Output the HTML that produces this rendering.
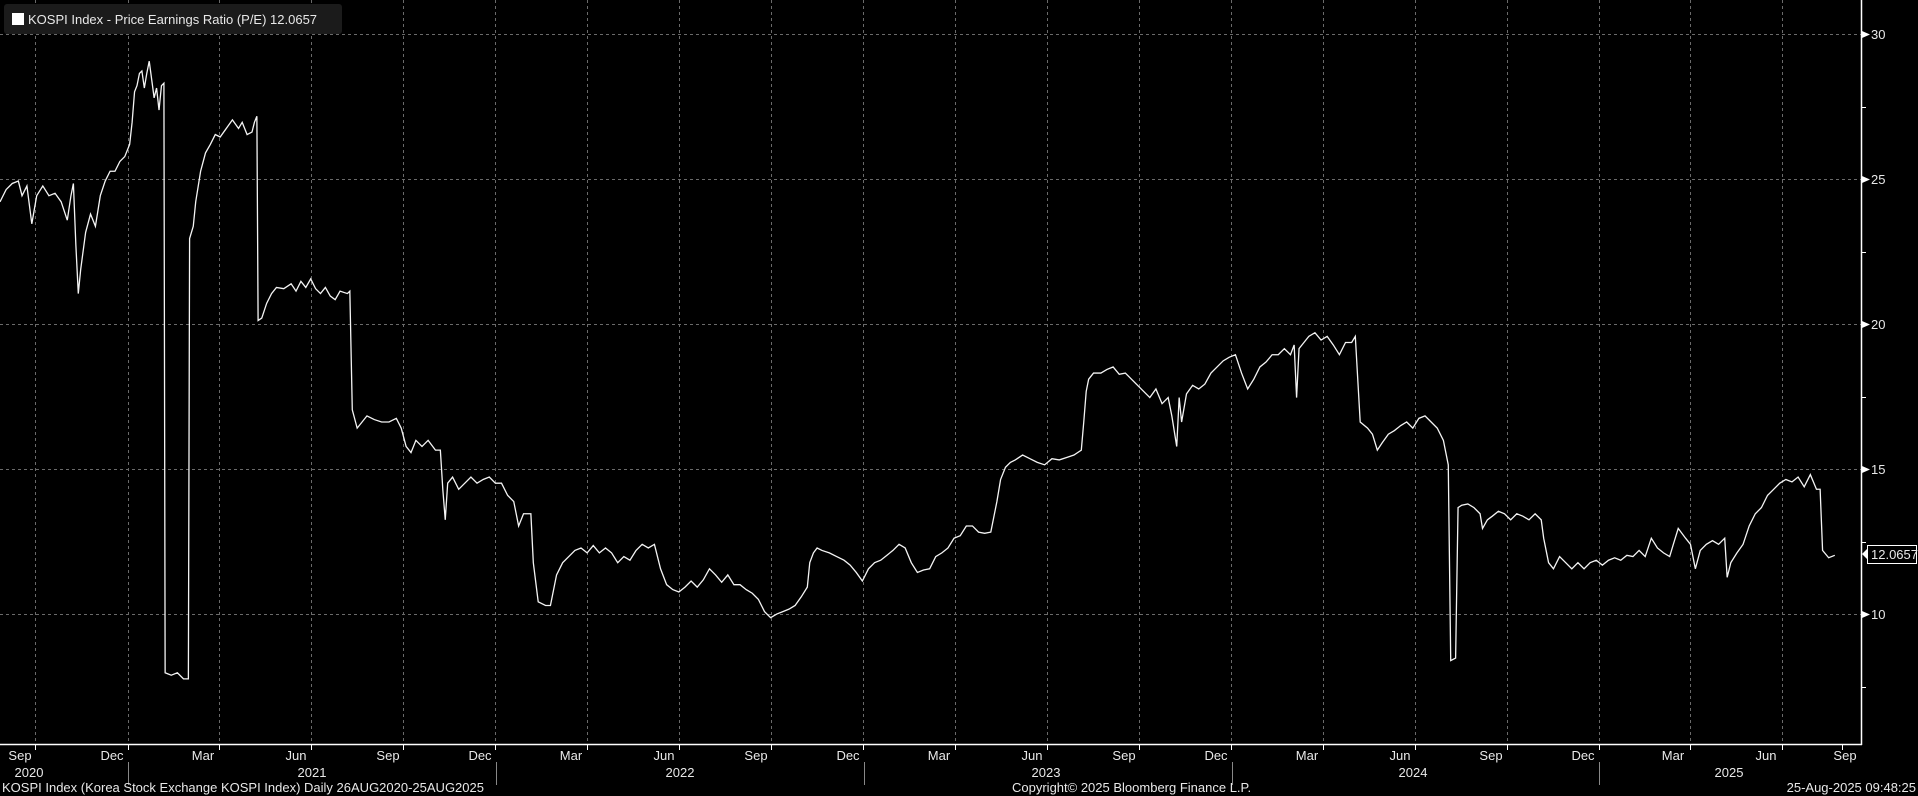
<!DOCTYPE html>
<html><head><meta charset="utf-8"><style>
html,body{margin:0;padding:0;background:#000;width:1918px;height:796px;overflow:hidden}
svg{display:block}
text{font-family:"Liberation Sans",sans-serif;fill:#e8e8e8;font-size:13px}
</style></head><body>
<svg width="1918" height="796" viewBox="0 0 1918 796" xmlns="http://www.w3.org/2000/svg">
<rect width="1918" height="796" fill="#000"/>
<g stroke="#6a6a6a" stroke-width="1" stroke-dasharray="3,3">
<line x1="0" y1="34.5" x2="1861" y2="34.5"/>
<line x1="0" y1="179.5" x2="1861" y2="179.5"/>
<line x1="0" y1="324.5" x2="1861" y2="324.5"/>
<line x1="0" y1="469.5" x2="1861" y2="469.5"/>
<line x1="0" y1="614.5" x2="1861" y2="614.5"/>
<line x1="35.5" y1="0" x2="35.5" y2="744"/><line x1="128.5" y1="0" x2="128.5" y2="744"/>
<line x1="219.5" y1="0" x2="219.5" y2="744"/><line x1="311.5" y1="0" x2="311.5" y2="744"/>
<line x1="403.5" y1="0" x2="403.5" y2="744"/><line x1="495.5" y1="0" x2="495.5" y2="744"/>
<line x1="587.5" y1="0" x2="587.5" y2="744"/><line x1="679.5" y1="0" x2="679.5" y2="744"/>
<line x1="771.5" y1="0" x2="771.5" y2="744"/><line x1="863.5" y1="0" x2="863.5" y2="744"/>
<line x1="955.5" y1="0" x2="955.5" y2="744"/><line x1="1047.5" y1="0" x2="1047.5" y2="744"/>
<line x1="1139.5" y1="0" x2="1139.5" y2="744"/><line x1="1231.5" y1="0" x2="1231.5" y2="744"/>
<line x1="1323.5" y1="0" x2="1323.5" y2="744"/><line x1="1415.5" y1="0" x2="1415.5" y2="744"/>
<line x1="1507.5" y1="0" x2="1507.5" y2="744"/><line x1="1599.5" y1="0" x2="1599.5" y2="744"/>
<line x1="1690.5" y1="0" x2="1690.5" y2="744"/><line x1="1782.5" y1="0" x2="1782.5" y2="744"/>
</g>
<g transform="scale(1.2232)">
<polyline fill="none" stroke="#f4f4f4" stroke-width="1.3" vector-effect="non-scaling-stroke" points="0,165 5,155 10,150 15,148 18,160 22,152 26,183 30,160 35,152 40,160 45,158 50,165 55,180 58,160 60,150 62,200 64,240 66,220 70,190 74,175 78,185 82,160 86,148 90,140 94,140 98,132 102,128 106,118 108,100 110,75 112,70 114,60 116,58 118,72 120,60 122,50 124,65 126,80 128,72 130,90 132,70 134,68 135,550 140,552 145,550 150,555 154,555 155,195 158,185 160,165 164,140 168,125 172,118 176,110 180,112 185,105 190,98 195,105 198,100 202,110 206,108 208,100 210,95 211,262 214,260 218,248 222,240 226,235 232,236 238,232 242,238 246,230 250,235 254,228 258,236 262,240 266,235 270,242 274,245 278,238 284,240 286,238 288,335 292,350 296,345 300,340 306,343 312,345 318,345 324,342 328,350 332,365 336,370 340,360 345,365 350,360 356,368 360,368 362,400 364,425 366,395 370,390 375,400 380,395 385,390 390,395 395,392 400,390 405,395 410,395 415,405 420,410 424,430 428,420 434,420 436,460 440,492 446,495 450,495 455,470 460,460 465,455 470,450 475,448 480,452 485,446 490,452 495,448 500,452 505,460 510,455 515,458 520,450 525,445 530,448 535,445 540,465 545,478 550,482 555,484 560,480 565,475 570,480 575,474 580,465 585,470 590,476 595,470 600,478 605,478 610,482 615,485 620,490 625,500 630,505 635,502 640,500 645,498 650,495 655,488 660,480 662,460 665,452 668,448 672,450 678,452 684,455 690,458 695,462 700,468 705,475 710,465 715,460 720,458 725,454 730,450 735,445 740,448 745,460 750,468 755,466 760,465 765,455 770,452 775,448 780,440 785,438 790,430 795,430 800,435 805,436 810,435 815,410 818,392 822,382 826,378 830,376 836,372 842,375 848,378 854,380 860,375 866,376 872,374 878,372 884,368 886,345 888,320 890,310 894,305 900,305 905,302 910,300 915,306 920,305 925,310 930,315 935,320 940,325 945,318 950,330 955,325 958,340 962,365 964,325 966,345 970,322 975,315 980,318 985,314 990,305 995,300 1000,295 1005,292 1010,290 1015,305 1020,318 1025,310 1030,300 1035,296 1040,290 1045,290 1050,285 1055,290 1058,282 1060,325 1062,285 1066,280 1070,275 1075,272 1080,278 1085,275 1090,282 1095,290 1100,280 1105,280 1108,275 1112,345 1118,350 1122,355 1126,368 1130,362 1135,355 1140,352 1145,348 1150,345 1155,350 1160,342 1165,340 1170,345 1175,350 1180,360 1184,380 1186,540 1190,538 1192,415 1195,413 1200,412 1205,415 1210,420 1212,432 1216,425 1220,422 1225,418 1230,420 1235,425 1240,420 1245,422 1250,425 1255,420 1260,425 1262,440 1266,460 1270,465 1275,455 1280,460 1285,465 1290,460 1295,465 1300,460 1305,458 1310,462 1315,458 1320,456 1325,458 1330,454 1335,455 1340,450 1345,455 1350,440 1355,448 1360,452 1365,455 1368,445 1372,432 1378,440 1382,445 1386,465 1390,450 1395,445 1400,442 1405,445 1410,440 1412,472 1415,460 1420,452 1425,445 1430,430 1435,420 1440,415 1445,405 1450,400 1455,395 1460,392 1465,394 1470,390 1475,398 1480,388 1485,400 1488,400 1490,450 1495,456 1500,454"/>
</g>
<!-- axes -->
<line x1="1861.5" y1="0" x2="1861.5" y2="745" stroke="#fff" stroke-width="1.5"/>
<line x1="0" y1="744.5" x2="1862" y2="744.5" stroke="#fff" stroke-width="1.5"/>
<g fill="#fff">
<polygon points="1862,31 1870,34.5 1862,38"/><polygon points="1862,176 1870,179.5 1862,183"/>
<polygon points="1862,321 1870,324.5 1862,328"/><polygon points="1862,466 1870,469.5 1862,473"/>
<polygon points="1862,611 1870,614.5 1862,618"/>
</g>
<g stroke="#fff"><line x1="1862" y1="107.5" x2="1866" y2="107.5"/><line x1="1862" y1="252.5" x2="1866" y2="252.5"/><line x1="1862" y1="397.5" x2="1866" y2="397.5"/><line x1="1862" y1="542.5" x2="1866" y2="542.5"/><line x1="1862" y1="687.5" x2="1866" y2="687.5"/></g>
<g font-size="14"><text x="1871" y="39">30</text><text x="1871" y="184">25</text><text x="1871" y="329">20</text><text x="1871" y="474">15</text><text x="1871" y="619">10</text></g>
<!-- value box -->
<polygon points="1862,554 1868,548 1868,560" fill="#fff"/>
<rect x="1867.5" y="545.5" width="49" height="18" fill="#000" stroke="#fff"/>
<text x="1871" y="559">12.0657</text>
<!-- x ticks -->
<g stroke="#fff"><line x1="35.5" y1="745" x2="35.5" y2="750"/><line x1="128.5" y1="745" x2="128.5" y2="750"/><line x1="219.5" y1="745" x2="219.5" y2="750"/><line x1="311.5" y1="745" x2="311.5" y2="750"/><line x1="403.5" y1="745" x2="403.5" y2="750"/><line x1="495.5" y1="745" x2="495.5" y2="750"/><line x1="587.5" y1="745" x2="587.5" y2="750"/><line x1="679.5" y1="745" x2="679.5" y2="750"/><line x1="771.5" y1="745" x2="771.5" y2="750"/><line x1="863.5" y1="745" x2="863.5" y2="750"/><line x1="955.5" y1="745" x2="955.5" y2="750"/><line x1="1047.5" y1="745" x2="1047.5" y2="750"/><line x1="1139.5" y1="745" x2="1139.5" y2="750"/><line x1="1231.5" y1="745" x2="1231.5" y2="750"/><line x1="1323.5" y1="745" x2="1323.5" y2="750"/><line x1="1415.5" y1="745" x2="1415.5" y2="750"/><line x1="1507.5" y1="745" x2="1507.5" y2="750"/><line x1="1599.5" y1="745" x2="1599.5" y2="750"/><line x1="1690.5" y1="745" x2="1690.5" y2="750"/><line x1="1782.5" y1="745" x2="1782.5" y2="750"/><line x1="1842.5" y1="745" x2="1842.5" y2="750"/></g>
<g stroke="#888"><line x1="128.5" y1="762" x2="128.5" y2="785"/><line x1="496.5" y1="762" x2="496.5" y2="785"/><line x1="864.5" y1="762" x2="864.5" y2="785"/><line x1="1232.5" y1="762" x2="1232.5" y2="785"/><line x1="1599.5" y1="762" x2="1599.5" y2="785"/></g>
<g text-anchor="middle">
<text x="20" y="760">Sep</text><text x="112" y="760">Dec</text><text x="203" y="760">Mar</text><text x="296" y="760">Jun</text><text x="388" y="760">Sep</text><text x="480" y="760">Dec</text><text x="571" y="760">Mar</text><text x="664" y="760">Jun</text><text x="756" y="760">Sep</text><text x="848" y="760">Dec</text><text x="939" y="760">Mar</text><text x="1032" y="760">Jun</text><text x="1124" y="760">Sep</text><text x="1216" y="760">Dec</text><text x="1307" y="760">Mar</text><text x="1400" y="760">Jun</text><text x="1491" y="760">Sep</text><text x="1583" y="760">Dec</text><text x="1673" y="760">Mar</text><text x="1766" y="760">Jun</text><text x="1845" y="760">Sep</text>
<text x="29" y="777">2020</text><text x="312" y="777">2021</text><text x="680" y="777">2022</text><text x="1046" y="777">2023</text><text x="1413" y="777">2024</text><text x="1729" y="777">2025</text>
</g>
<text x="2" y="792" font-size="12.5">KOSPI Index (Korea Stock Exchange KOSPI Index)  Daily 26AUG2020-25AUG2025</text>
<text x="1012" y="792" font-size="12.5">Copyright© 2025 Bloomberg Finance L.P.</text>
<text x="1916" y="792" font-size="12.5" text-anchor="end">25-Aug-2025 09:48:25</text>
<!-- title -->
<rect x="4" y="4" width="338" height="30" rx="3" fill="#1b1b1b"/>
<rect x="12" y="13" width="12" height="12" fill="#fff"/>
<text x="28" y="24" font-size="14" fill="#f0f0f0">KOSPI Index - Price Earnings Ratio (P/E) 12.0657</text>
</svg>
</body></html>
